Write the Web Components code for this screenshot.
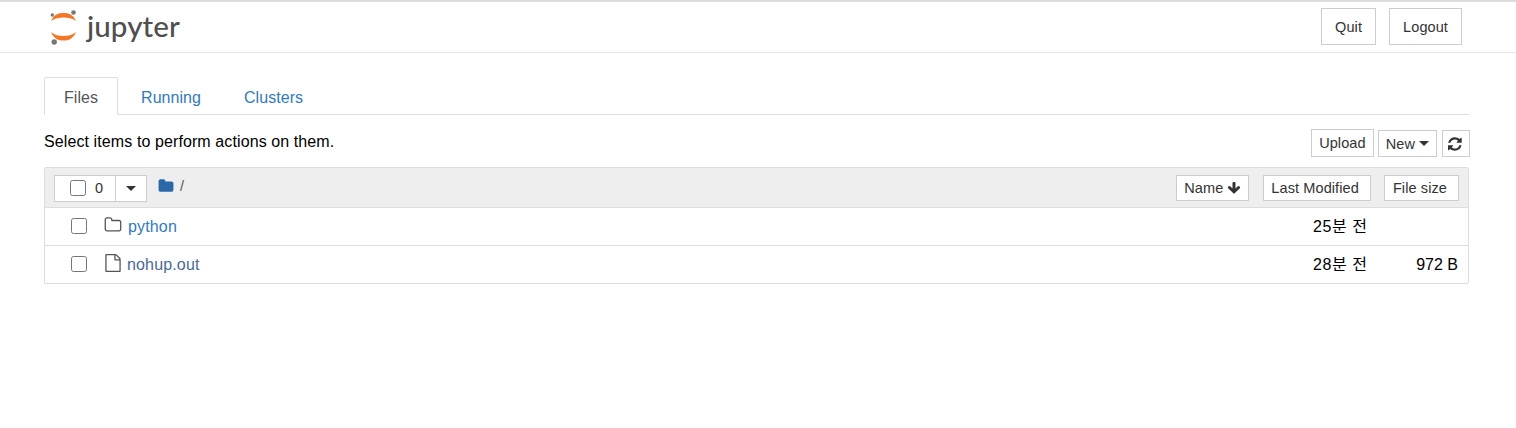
<!DOCTYPE html>
<html lang="en"><head><meta charset="utf-8"><title>Jupyter</title>
<style>
html,body{margin:0;padding:0;background:#fff;font-family:"Liberation Sans",Arial,"Noto Sans CJK KR",sans-serif;font-size:16px;color:#000}
</style></head><body>
<jp-app>
  <jp-header slot="header">
    <jp-btn pad="big">Quit</jp-btn>
    <jp-btn pad="big">Logout</jp-btn>
  </jp-header>
  <jp-tabs>
    <jp-tab active>Files</jp-tab>
    <jp-tab>Running</jp-tab>
    <jp-tab>Clusters</jp-tab>
  </jp-tabs>
  <jp-toolbar>Select items to perform actions on them.</jp-toolbar>
  <jp-list>
    <jp-row kind="folder" when="25분 전">python</jp-row>
    <jp-row kind="file" when="28분 전" size="972 B">nohup.out</jp-row>
  </jp-list>
</jp-app>
<script>
const ICONS={
 refresh:'M1511 1056q0 5-1 7-64 268-268 434.5t-478 166.5q-146 0-282.5-55t-243.5-157l-129 129q-19 19-45 19t-45-19-19-45v-448q0-26 19-45t45-19h448q26 0 45 19t19 45-19 45l-137 137q71 66 161 102t187 36q134 0 250-65t186-179q11-17 53-117 8-23 30-23h192q13 0 22.5 9.5t9.5 22.5zm25-800v448q0 26-19 45t-45 19h-448q-26 0-45-19t-19-45 19-45l138-138q-148-137-349-137-134 0-250 65t-186 179q-11 17-53 117-8 23-30 23h-199q-13 0-22.5-9.5t-9.5-22.5v-7q65-268 270-434.5t480-166.5q146 0 284 55.5t245 156.5l130-129q19-19 45-19t45 19 19 45z',
 folder:'M1728 608v704q0 92-66 158t-158 66h-1216q-92 0-158-66t-66-158v-960q0-92 66-158t158-66h320q92 0 158 66t66 158v32h672q92 0 158 66t66 158z',
 folderO:'M1600 1312v-704q0-40-28-68t-68-28h-704q-40 0-68-28t-28-68v-64q0-40-28-68t-68-28h-320q-40 0-68 28t-28 68v960q0 40 28 68t68 28h1216q40 0 68-28t28-68zm128-704v704q0 92-66 158t-158 66h-1216q-92 0-158-66t-66-158v-960q0-92 66-158t158-66h320q92 0 158 66t66 158v32h672q92 0 158 66t66 158z',
 fileO:'M1596 380q28 28 48 76t20 88v1152q0 40-28 68t-68 28h-1344q-40 0-68-28t-28-68v-1600q0-40 28-68t68-28h896q40 0 88 20t76 48zm-444-244v376h376q-10-29-22-41l-313-313q-12-12-41-22zm384 1528v-1024h-416q-40 0-68-28t-28-68v-416h-768v1536h1280z',
 down:'M1675 832q0 53-37 90l-651 652q-39 37-91 37-53 0-90-37l-651-652q-38-36-38-90 0-53 38-91l74-75q39-37 91-37 53 0 90 37l294 294v-704q0-52 38-90t90-38h128q52 0 90 38t38 90v704l294-294q37-37 90-37 52 0 91 37l75 75q37 39 37 91z'
};
const icon=(n,s,c)=>`<svg width="${s}" height="${s}" viewBox="0 0 1792 1792" fill="${c}" style="display:block;flex:none"><path d="${ICONS[n]}"/></svg>`;
function def(name,html){
  customElements.define(name,class extends HTMLElement{
    connectedCallback(){
      if(this.shadowRoot)return;
      const r=this.attachShadow({mode:'open'});
      r.innerHTML=typeof html==='function'?html(this):html;
    }
  });
}
def('jp-app',`<style>:host{display:block}
.main{padding:24px 46px 0 44px}</style>
<slot name="header"></slot><div class="main"><slot></slot></div>`);

def('jp-logo',`<style>:host{display:flex;align-items:center}
svg{display:block}
.t{font:500 29.5px/1 Lato,sans-serif;letter-spacing:.1px;margin-left:9px;margin-top:-5px;color:#4f4f4f}</style>
<svg width="28" height="36" viewBox="0 0 28 36">
<path d="M1 11C4 4 8.500 3 13.500 3S23 4 26 11C22 8.300 18 7.500 13.500 7.500S5 8.300 1 11Z" fill="#f37726"/>
<path d="M1 22C4 29 8.500 30.500 13.500 30.500S23 29 26 22C22 25 18 26 13.500 26S5 25 1 22Z" fill="#f37726"/>
<circle cx="23.500" cy="2.500" r="2.300" fill="#767677"/>
<circle cx="2.300" cy="5" r="1.700" fill="#767677"/>
<circle cx="4.200" cy="32" r="2.700" fill="#767677"/>
</svg><span class="t">jupyter</span>`);

def('jp-header',`<style>:host{display:flex;box-sizing:border-box;height:53px;border-top:2px solid #dcdce0;border-bottom:1px solid #e7e7e7;padding:6px 54px 0 50px;align-items:flex-start}
jp-logo{margin-top:2px}
.sp{flex:1}
::slotted(jp-btn:first-of-type){margin-right:13px}</style>
<jp-logo></jp-logo><div class="sp"></div><slot></slot>`);

def('jp-btn',el=>{
 const big=el.getAttribute('pad')==='big';
 return `<style>:host{display:inline-flex;box-sizing:border-box;align-items:center;justify-content:center;white-space:nowrap;letter-spacing:.1px;
 border:1px solid #ccc;background:#fff;color:#333;font-size:14.5px;${big?'height:37px;padding:0 13px;':'height:28px;padding:0 7px;'}gap:4px}</style><slot></slot>`;
});

def('jp-tabs',`<style>:host{display:flex;height:38px;box-sizing:border-box;border-bottom:1px solid #ddd;width:1425px}</style><slot></slot>`);

def('jp-tab',el=>{
 const a=el.hasAttribute('active');
 return `<style>:host{display:block;box-sizing:border-box;height:38px;padding:0 19px;margin-right:3px;line-height:39px;font-size:16px;letter-spacing:.05px;
 border:1px solid ${a?'#ddd':'transparent'};${a?'border-bottom-color:#fff;background:#fff;color:#555;':'color:#337ab7;'}border-radius:2px 2px 0 0}</style><slot></slot>`;
});

def('jp-toolbar',`<style>:host{display:flex;align-items:flex-start;height:52px;padding-top:14px;box-sizing:border-box;width:1426px}
.t{flex:1;line-height:26px;letter-spacing:.1px}
.b{display:flex;gap:4px;align-items:flex-end}
.r{margin-left:1px;height:27px}
.n{height:27px}
.car{width:0;height:0;border-left:5px solid transparent;border-right:5px solid transparent;border-top:5px solid #333;display:block}
</style><div class="t"><slot></slot></div><div class="b"><jp-btn>Upload</jp-btn><jp-btn class="n">New<span class="car"></span></jp-btn><jp-btn class="r" style="padding:0 5px">${icon('refresh',16,'#333')}</jp-btn></div>`);

def('jp-list',`<style>:host{display:block;box-sizing:border-box;width:1425px;border:1px solid #ddd;border-radius:2px}
.h{display:flex;align-items:flex-start;height:40px;box-sizing:border-box;background:#eee;border-bottom:1px solid #ddd;padding:7px 9px 0 9px}
.sel{display:flex;box-sizing:border-box;height:27px}
.sel>div{box-sizing:border-box;border:1px solid #ccc;background:#fff;height:27px;display:flex;align-items:center}
.a{width:62px;padding:0 0 2px 15px;gap:9px;font-size:14.5px;color:#333}
.a input{margin:0;width:16px;height:16px}
.d{width:32px;margin-left:-1px;justify-content:center}
.car{width:0;height:0;border-left:5px solid transparent;border-right:5px solid transparent;border-top:5px solid #333;display:block}
.crumb{display:flex;margin-left:11px;margin-top:2px;align-items:center;gap:6px;color:#555;font-size:14.5px;height:18px}
.sp{flex:1}
.sort{height:26px}
</style>
<div class="h"><div class="sel"><div class="a"><input type="checkbox"><span>0</span></div><div class="d"><span class="car"></span></div></div>
<div class="crumb">${icon('folder',16,'#2a68aa')}<span>/</span></div><div class="sp"></div>
<jp-btn class="sort">Name${icon('down',14,'#333')}</jp-btn><jp-btn class="sort" style="margin-left:14px;padding:0 11px 0 7px">Last Modified</jp-btn><jp-btn class="sort" style="margin-left:13px;padding:0 11px 0 8px">File size</jp-btn></div>
<slot></slot>`);

def('jp-row',el=>{
 const f=el.getAttribute('kind')==='folder';
 return `<style>:host{display:flex;align-items:center;box-sizing:border-box;height:38px;padding:0 10px 0 26px;border-bottom:1px solid #ddd}
:host(:last-child){border-bottom:0;height:37px}
input{margin:-1px 0 0;width:16px;height:16px;flex:none}
.i{width:18px;margin-left:17px;display:flex;margin-top:-3px}
.n{flex:1;letter-spacing:.15px;color:${f?'#337ab7':'#4a6a92'};margin-left:${f?'6':'5'}px}
.w{width:55px;white-space:nowrap;letter-spacing:.6px;margin-top:-3px}
.s{width:90px;text-align:right}
</style><input type="checkbox"><span class="i">${icon(f?'folderO':'fileO',18,'#555')}</span><span class="n"><slot></slot></span><span class="w">${el.getAttribute('when')}</span><span class="s">${el.getAttribute('size')||''}</span>`;
});
</script>
</body></html>
